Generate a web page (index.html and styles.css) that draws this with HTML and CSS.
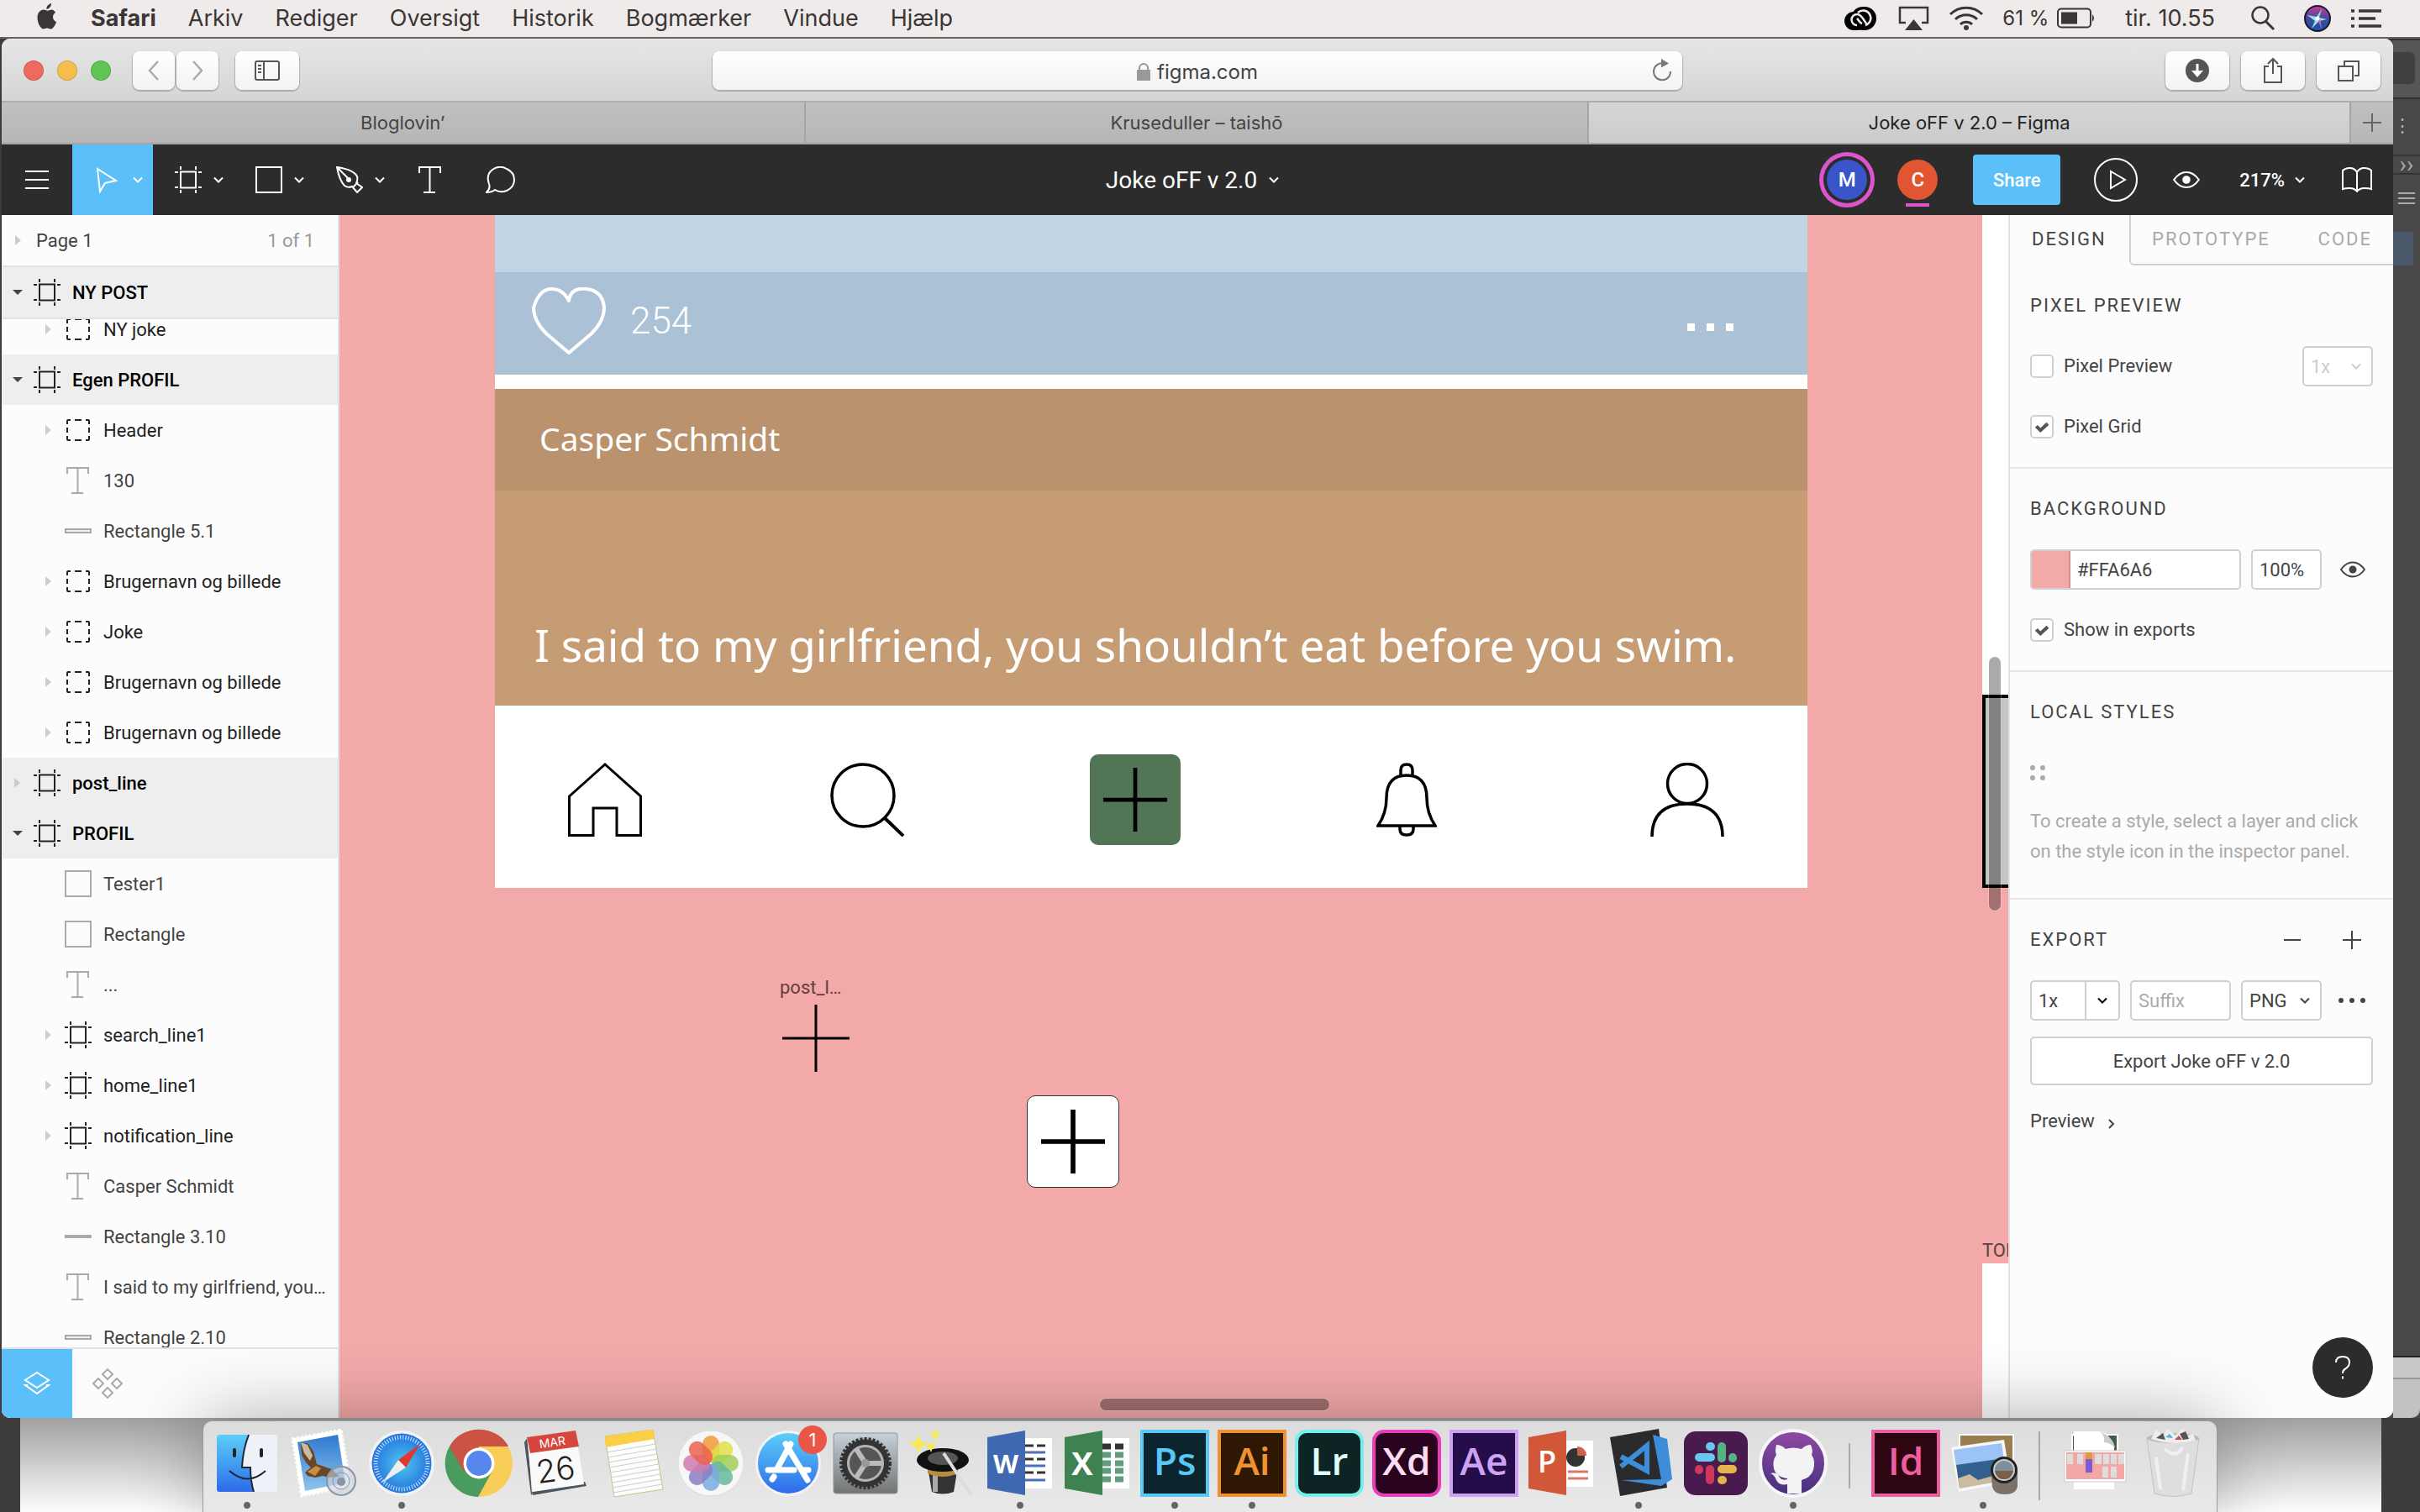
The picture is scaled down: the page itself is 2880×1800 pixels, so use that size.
FILE: index.html
```html
<!DOCTYPE html>
<html lang="da">
<head>
<meta charset="utf-8">
<title>Joke oFF v 2.0 – Figma</title>
<link rel="stylesheet" href="styles.css">
</head>
<body>
<svg class="sprite" aria-hidden="true">
  <symbol id="chev" viewBox="0 0 12 8"><path d="M1 1.500 6 6.500 11 1.500" fill="none" stroke="currentColor" stroke-width="2"/></symbol>
  <symbol id="frame" viewBox="0 0 32 32"><path d="M7 6.500h18v19H7zM7 0v4M25 0v4M7 28v4M25 28v4M0 7h4M28 7h4M0 25h4M28 25h4" fill="none" stroke="currentColor" stroke-width="2"/></symbol>
  <symbol id="group" viewBox="0 0 32 32"><path d="M3 9V5q0-1 1-1h3M3 13v6M3 23v4q0 1 1 1h3M25 4h3q1 0 1 1v4M29 13v6M29 23v4q0 1-1 1h-3M12 4h8M12 28h8" fill="none" stroke="currentColor" stroke-width="2"/></symbol>
  <symbol id="text" viewBox="0 0 32 32"><path d="M3 8V1h25v7M15.500 1v30M8 31h14" fill="none" stroke="currentColor" stroke-width="2"/></symbol>
  <symbol id="rect" viewBox="0 0 32 32"><path d="M1 1h30v30H1z" fill="none" stroke="currentColor" stroke-width="2"/></symbol>
  <symbol id="bar" viewBox="0 0 32 32"><path d="M1 14h30v4H1z" fill="#eee" stroke="currentColor" stroke-width="2"/></symbol>
  <symbol id="bar-thin" viewBox="0 0 32 32"><path d="M0 14h32v4H0z" fill="currentColor"/></symbol>
  <symbol id="closed" viewBox="0 0 12 12"><path d="M2 0 9 6 2 12z" fill="currentColor"/></symbol>
  <symbol id="open" viewBox="0 0 12 12"><path d="M0 3h12L6 9z" fill="currentColor"/></symbol>
  <symbol id="eye" viewBox="0 0 32 24"><path d="M2 12Q8 3.500 16 3.500T30 12Q24 20.500 16 20.500T2 12z" fill="none" stroke="currentColor" stroke-width="2"/><circle cx="16" cy="12" r="4.500" fill="currentColor"/></symbol>
  <symbol id="cross" viewBox="0 0 80 80"><path d="M40 0v80M0 40h80" stroke="currentColor" fill="none"/></symbol>
</svg>

<div class="desktop">
  <div class="app-behind" aria-hidden="true">
    <div class="behind-bar"></div>
    <div class="behind-tabs">⋮</div>
    <div class="behind-chevrons">››</div>
    <div class="behind-panel">
      <svg width="20" height="16" viewBox="0 0 20 16"><path d="M0 2h20M0 8h20M0 14h20" stroke="#aaa" stroke-width="2"/></svg>
      <div class="behind-thumb"></div>
    </div>
    <div class="behind-foot"></div>
  </div>
  <div class="sheet-behind" aria-hidden="true"></div>

  <header class="menubar">
    <nav class="menus" aria-label="Menulinje">
      <svg class="apple" width="28" height="32" viewBox="0 0 28 32"><path d="M19 0c.3 3.200-2.400 6.800-5.600 7C13 4 15.800.600 19 0zM24 11c-2 1.300-3 3-3 5.200 0 2.700 1.600 4.700 4 5.700-1.400 4.400-4.200 8.600-6.800 8.600-1.700 0-2.300-1-4.200-1s-2.700 1-4.200 1C6.600 30.500 2.500 23.500 2.500 17c0-6 3.700-9.400 7.300-9.400 2 0 3.300 1.200 4.800 1.200 1.300 0 2.700-1.300 5-1.300 1.700 0 3.300 1.200 4.400 3.500z" fill="#3b3535"/></svg>
      <a href="#" class="app-name">Safari</a><a href="#">Arkiv</a><a href="#">Rediger</a><a href="#">Oversigt</a><a href="#">Historik</a><a href="#">Bogmærker</a><a href="#">Vindue</a><a href="#">Hjælp</a>
    </nav>
    <div class="status">
      <svg class="st-cc" width="40" height="30" viewBox="0 0 40 30"><rect x="1" y="7" width="26" height="22" rx="11" fill="#000"/><rect x="9" y="1" width="30" height="28" rx="14" fill="#000"/><path d="M16 23a6.500 6.500 0 1 1 0-13c3 0 5 2 7 5l4 6M22 21c-3-1-4-4-6-6M17 8a9 9 0 1 1 9 15" fill="none" stroke="#efebea" stroke-width="2.500"/></svg>
      <svg class="st-air" width="38" height="30" viewBox="0 0 38 30"><path d="M9 20H2V2h33v18h-7" fill="none" stroke="#3b3535" stroke-width="2.500"/><path d="M18.500 16 29 29H8z" fill="#3b3535"/></svg>
      <svg class="st-wifi" width="42" height="30" viewBox="0 0 42 30"><path d="M2 10a27 27 0 0 1 38 0M8 16a19 19 0 0 1 26 0M14 22a10 10 0 0 1 14 0" fill="none" stroke="#3b3535" stroke-width="3"/><circle cx="21" cy="26" r="3" fill="#3b3535"/></svg>
      <span class="battery">61 %</span>
      <svg class="st-bat" width="46" height="26" viewBox="0 0 46 26"><rect x="1" y="1.500" width="39" height="22" rx="4" fill="none" stroke="#3b3535" stroke-width="2"/><path d="M5 5.500h19v14H5z" fill="#3b3535"/><path d="M42 8q4 4.500 0 9z" fill="#3b3535"/></svg>
      <time class="clock">tir. 10.55</time>
      <svg class="st-search" width="30" height="30" viewBox="0 0 30 30"><circle cx="12" cy="11" r="9.500" fill="none" stroke="#3b3535" stroke-width="2.500"/><path d="m18 18 10 10" stroke="#3b3535" stroke-width="3"/></svg>
      <svg class="st-siri" width="32" height="32" viewBox="0 0 32 32"><defs><linearGradient id="siri" x2="0" y2="1"><stop offset="0" stop-color="#c93c96"/><stop offset=".5" stop-color="#454a9c"/><stop offset="1" stop-color="#1a4f9e"/></linearGradient></defs><circle cx="16" cy="16" r="15" fill="url(#siri)" stroke="#181830" stroke-width="2"/><path d="M4 12l11 2 6-9-3 10 9 2-9 2-9 9 4-9z" fill="#8fe6ea"/><path d="m16 16 5 13-2-13z" fill="#d86ad0"/><circle cx="16" cy="16" r="2.500" fill="#fff"/></svg>
      <svg class="st-list" width="38" height="24" viewBox="0 0 38 24"><path d="M9 3h27M9 12h20M9 21h27M0 3h4M0 12h4M0 21h4" stroke="#3b3535" stroke-width="3.500"/></svg>
    </div>
  </header>

  <div class="window">
    <div class="safari-bar">
      <div class="safari-left">
        <span class="light red"></span><span class="light yellow"></span><span class="light green"></span>
        <button class="sbtn nav-back" aria-label="Tilbage"><svg width="16" height="26" viewBox="0 0 16 26"><path d="M13 2 3 13l10 11" fill="none" stroke="#aaa" stroke-width="2.500"/></svg></button>
        <button class="sbtn nav-fwd" aria-label="Frem"><svg width="16" height="26" viewBox="0 0 16 26"><path d="m3 2 10 11L3 24" fill="none" stroke="#aaa" stroke-width="2.500"/></svg></button>
        <button class="sbtn nav-side" aria-label="Indholdsoversigt"><svg width="30" height="24" viewBox="0 0 30 24"><rect x="1" y="1" width="28" height="22" rx="2" fill="none" stroke="#555" stroke-width="2"/><path d="M11 1v22M4 6h4M4 10h4M4 14h4" stroke="#555" stroke-width="2"/></svg></button>
      </div>
      <div class="url">
        <span class="site"><svg width="16" height="21" viewBox="0 0 16 21"><path d="M0 8h16v13H0z" fill="#999"/><path d="M3 9V6a5 5 0 0 1 10 0v3" fill="none" stroke="#999" stroke-width="2"/></svg>figma.com</span>
        <button class="plain reload" aria-label="Genindlæs"><svg width="24" height="28" viewBox="0 0 24 28"><path d="M14 5.500A10 10 0 1 0 22 15" fill="none" stroke="#777" stroke-width="2"/><path d="m11 0 9 5.500-9 5z" fill="#777"/></svg></button>
      </div>
      <div class="safari-right">
        <button class="sbtn" aria-label="Overførsler"><svg width="28" height="28" viewBox="0 0 28 28"><circle cx="14" cy="14" r="14" fill="#555"/><path d="M14 6v10" stroke="#fff" stroke-width="3"/><path d="M7 14h14l-7 8z" fill="#fff"/></svg></button>
        <button class="sbtn" aria-label="Del"><svg width="24" height="32" viewBox="0 0 24 32"><path d="M7 11H2v19h20V11h-5M12 20V3M6 8l6-6 6 6" fill="none" stroke="#555" stroke-width="2"/></svg></button>
        <button class="sbtn" aria-label="Faner"><svg width="26" height="26" viewBox="0 0 26 26"><path d="M1 8h17v17H1zM8 7V2h17v17h-5" fill="none" stroke="#555" stroke-width="2"/></svg></button>
      </div>
    </div>
    <nav class="safari-tabs" aria-label="Faner">
      <a href="#">Bloglovin’</a><a href="#">Kruseduller – taishō</a><a href="#" class="current">Joke oFF v 2.0 – Figma</a><button class="plain" aria-label="Ny fane"><svg width="22" height="22" viewBox="0 0 22 22"><path d="M11 0v22M0 11h22" stroke="#666" stroke-width="2"/></svg></button>
    </nav>

    <div class="toolbar">
      <div class="tools">
        <button class="tool wide" aria-label="Menu"><svg width="30" height="22" viewBox="0 0 30 22"><path d="M1 1h28M1 11h28M1 21h28" stroke="#fff" stroke-width="2"/></svg></button>
        <button class="tool active" aria-label="Flyt"><svg width="32" height="32" viewBox="0 0 32 32"><path d="m4 3 22 14-13 3-6 10z" fill="none" stroke="#fff" stroke-width="2"/></svg><svg class="chev"><use href="#chev"/></svg></button>
        <button class="tool" aria-label="Ramme"><svg width="32" height="32"><use href="#frame"/></svg><svg class="chev"><use href="#chev"/></svg></button>
        <button class="tool" aria-label="Rektangel"><svg width="32" height="32"><use href="#rect"/></svg><svg class="chev"><use href="#chev"/></svg></button>
        <button class="tool" aria-label="Pen"><svg width="32" height="32" viewBox="0 0 32 32"><path d="M1 1q20 3 24 11 1 4-1 8l7 5-6 6-6-7q-5 2-9-1Q4 17 1 1zM1 1l13 13M20 25l6-6" fill="none" stroke="#fff" stroke-width="2"/><circle cx="15" cy="16" r="3" fill="#fff"/></svg><svg class="chev"><use href="#chev"/></svg></button>
        <button class="tool wide" aria-label="Tekst"><svg width="32" height="32"><use href="#text"/></svg></button>
        <button class="tool wide" aria-label="Kommentar"><svg width="36" height="32" viewBox="0 0 36 32"><path d="M1 31q5-5 3-10Q0 10 8 4t17-1q9 4 9 13t-9 13q-8 3-14-1-4 3-10 3z" fill="none" stroke="#fff" stroke-width="2"/></svg></button>
      </div>
      <button class="doc-title">Joke oFF v 2.0<svg class="chev"><use href="#chev"/></svg></button>
      <div class="actions">
        <span class="avatar m">M</span><span class="avatar c">C</span>
        <button class="share">Share</button>
        <button class="plain" aria-label="Præsenter"><svg width="54" height="54" viewBox="0 0 54 54"><circle cx="27" cy="27" r="25" fill="none" stroke="#fff" stroke-width="2"/><path d="m21 17 17 10-17 10z" fill="none" stroke="#fff" stroke-width="2"/></svg></button>
        <button class="plain eye" aria-label="Vis"><svg width="34" height="26"><use href="#eye"/></svg></button>
        <button class="plain zoom">217%<svg class="chev"><use href="#chev"/></svg></button>
        <button class="plain book" aria-label="Bibliotek"><svg width="36" height="30" viewBox="0 0 36 30"><path d="M18 6Q15 1 9.500 1T1 4v22q3-1 8.500-1t8.500 4q3-4 8.500-4t8.500 1V4q-3-3-8.500-3T18 6v22" fill="none" stroke="#fff" stroke-width="2"/></svg></button>
      </div>
    </div>

    <div class="editor">
      <aside class="layers">
        <div class="page-row"><svg class="tri"><use href="#closed"/></svg><span class="page-name">Page 1</span><span class="page-count">1 of 1</span></div>
        <div class="row frame sticky"><svg class="tri down"><use href="#open"/></svg><svg class="ico"><use href="#frame"/></svg><span>NY POST</span></div>
        <div class="list-clip">
          <ul class="list">
            <li class="row child dark"><svg class="tri"><use href="#closed"/></svg><svg class="ico"><use href="#group"/></svg><span>NY joke</span></li>
            <li class="row frame"><svg class="tri down"><use href="#open"/></svg><svg class="ico"><use href="#frame"/></svg><span>Egen PROFIL</span></li>
            <li class="row child dark"><svg class="tri"><use href="#closed"/></svg><svg class="ico"><use href="#group"/></svg><span>Header</span></li>
            <li class="row child"><i class="tri"></i><svg class="ico"><use href="#text"/></svg><span>130</span></li>
            <li class="row child"><i class="tri"></i><svg class="ico"><use href="#bar"/></svg><span>Rectangle 5.1</span></li>
            <li class="row child dark"><svg class="tri"><use href="#closed"/></svg><svg class="ico"><use href="#group"/></svg><span>Brugernavn og billede</span></li>
            <li class="row child dark"><svg class="tri"><use href="#closed"/></svg><svg class="ico"><use href="#group"/></svg><span>Joke</span></li>
            <li class="row child dark"><svg class="tri"><use href="#closed"/></svg><svg class="ico"><use href="#group"/></svg><span>Brugernavn og billede</span></li>
            <li class="row child dark"><svg class="tri"><use href="#closed"/></svg><svg class="ico"><use href="#group"/></svg><span>Brugernavn og billede</span></li>
            <li class="row frame"><svg class="tri"><use href="#closed"/></svg><svg class="ico"><use href="#frame"/></svg><span>post_line</span></li>
            <li class="row frame"><svg class="tri down"><use href="#open"/></svg><svg class="ico"><use href="#frame"/></svg><span>PROFIL</span></li>
            <li class="row child"><i class="tri"></i><svg class="ico"><use href="#rect"/></svg><span>Tester1</span></li>
            <li class="row child"><i class="tri"></i><svg class="ico"><use href="#rect"/></svg><span>Rectangle</span></li>
            <li class="row child"><i class="tri"></i><svg class="ico"><use href="#text"/></svg><span>...</span></li>
            <li class="row child dark"><svg class="tri"><use href="#closed"/></svg><svg class="ico"><use href="#frame"/></svg><span>search_line1</span></li>
            <li class="row child dark"><svg class="tri"><use href="#closed"/></svg><svg class="ico"><use href="#frame"/></svg><span>home_line1</span></li>
            <li class="row child dark"><svg class="tri"><use href="#closed"/></svg><svg class="ico"><use href="#frame"/></svg><span>notification_line</span></li>
            <li class="row child"><i class="tri"></i><svg class="ico"><use href="#text"/></svg><span>Casper Schmidt</span></li>
            <li class="row child"><i class="tri"></i><svg class="ico"><use href="#bar-thin"/></svg><span>Rectangle 3.10</span></li>
            <li class="row child"><i class="tri"></i><svg class="ico"><use href="#text"/></svg><span>I said to my girlfriend, you…</span></li>
            <li class="row child"><i class="tri"></i><svg class="ico"><use href="#bar"/></svg><span>Rectangle 2.10</span></li>
          </ul>
        </div>
        <div class="layer-foot">
          <button class="foot-btn on" aria-label="Lag"><svg width="32" height="30" viewBox="0 0 32 30"><path d="m16 2 14 9-14 9-14-9z" fill="none" stroke="#fff" stroke-width="2"/><path d="M5 17H2l14 10 14-10h-3" fill="none" stroke="#fff" stroke-width="2"/></svg></button>
          <button class="foot-btn" aria-label="Komponenter"><svg width="36" height="36" viewBox="0 0 36 36"><path d="m18 1 6 6-6 6-6-6zM18 23l6 6-6 6-6-6zM7 12l6 6-6 6-6-6zM29 12l6 6-6 6-6-6z" fill="none" stroke="#aaa" stroke-width="2"/></svg></button>
        </div>
      </aside>

      <main class="canvas">
        <section class="phone">
          <div class="post-tail"></div>
          <div class="post-bar">
            <svg width="88" height="80" viewBox="0 0 88 80"><path d="M44 16Q37 2 23 2T2 24q0 16 15 31l27 23 27-23q15-15 15-31Q84 4 65 2T44 16z" fill="none" stroke="#fff" stroke-width="4" stroke-linejoin="round"/></svg>
            <span class="likes">254</span>
            <span class="more"><i></i><i></i><i></i></span>
          </div>
          <div class="post-author">Casper Schmidt</div>
          <div class="post-text">I said to my girlfriend, you shouldn’t eat before you swim.</div>
          <div class="phone-nav">
            <svg width="88" height="88" viewBox="0 0 88 88"><path d="M1.500 40 44 2l42.500 38v46.500H58V54H30v32.500H1.500z" fill="none" stroke="#000" stroke-width="3"/></svg>
            <svg width="88" height="88" viewBox="0 0 88 88"><circle cx="39" cy="39" r="37" fill="none" stroke="#000" stroke-width="3.500"/><path d="m64 65 23 22" stroke="#000" stroke-width="4"/></svg>
            <span class="add"><svg width="76" height="76"><use href="#cross"/></svg></span>
            <svg width="72" height="88" viewBox="0 0 72 88"><path d="M29 16V9q0-7 7-7t7 7v7M2 75Q12 60 12 42q0-27 24-27t24 27q0 18 10 33zM28 76v3q0 7 8 7t8-7v-3" fill="none" stroke="#000" stroke-width="3.500"/></svg>
            <svg width="88" height="88" viewBox="0 0 88 88"><circle cx="44" cy="25" r="23.500" fill="none" stroke="#000" stroke-width="3.500"/><path d="M2 88q0-39 42-39t42 39" fill="none" stroke="#000" stroke-width="3.500"/></svg>
          </div>
        </section>
        <span class="frame-label label-post">post_l…</span>
        <svg class="node-plus" width="80" height="80"><use href="#cross"/></svg>
        <div class="node-add"><svg width="76" height="76"><use href="#cross"/></svg></div>
        <div class="side-frame"></div>
        <div class="side-rect"></div>
        <span class="frame-label label-top">TOPLIST</span>
        <div class="side-frame lower"></div>
        <div class="scroll-v"></div>
        <div class="scroll-h"></div>
      </main>

      <aside class="inspector">
        <div class="insp-tabs"><button class="itab on">DESIGN</button><div class="itab-rest"><button class="itab">PROTOTYPE</button><button class="itab">CODE</button></div></div>
        <section class="sec">
          <h2>PIXEL PREVIEW</h2>
          <div class="line"><label class="check"><input type="checkbox">Pixel Preview</label><span class="pick faded"><select aria-label="Skala" disabled><option>1x</option></select><svg class="chev"><use href="#chev"/></svg></span></div>
          <div class="line last"><label class="check"><input type="checkbox" checked>Pixel Grid</label></div>
        </section>
        <section class="sec">
          <h2>BACKGROUND</h2>
          <div class="line fields"><span class="color"><button class="swatch" aria-label="Farve"></button><input type="text" value="#FFA6A6" aria-label="Farvekode"></span><input class="field pct" type="text" value="100%" aria-label="Opacitet"><button class="plain show" aria-label="Synlig"><svg width="32" height="24"><use href="#eye"/></svg></button></div>
          <div class="line last"><label class="check"><input type="checkbox" checked>Show in exports</label></div>
        </section>
        <section class="sec styles">
          <h2>LOCAL STYLES</h2>
          <svg width="18" height="18" viewBox="0 0 18 18" fill="#aaa"><circle cx="3" cy="3" r="3"/><circle cx="15" cy="3" r="3"/><circle cx="3" cy="15" r="3"/><circle cx="15" cy="15" r="3"/></svg>
          <p>To create a style, select a layer and click on the style icon in the inspector panel.</p>
        </section>
        <section class="sec export">
          <div class="export-head"><h2>EXPORT</h2><button class="plain" aria-label="Fjern"><svg width="22" height="22" viewBox="0 0 22 22"><path d="M1 11h20" stroke="#444" stroke-width="2"/></svg></button><button class="plain" aria-label="Tilføj"><svg width="22" height="22" viewBox="0 0 22 22"><path d="M0 11h22M11 0v22" stroke="#444" stroke-width="2"/></svg></button></div>
          <div class="export-row"><span class="combo"><input type="text" value="1x" aria-label="Skala"><button aria-label="Vælg skala"><svg class="chev"><use href="#chev"/></svg></button></span><input class="field suffix" type="text" placeholder="Suffix" aria-label="Suffix"><span class="pick png"><select aria-label="Format"><option>PNG</option></select><svg class="chev"><use href="#chev"/></svg></span><button class="plain dots" aria-label="Mere"><svg width="32" height="6" viewBox="0 0 32 6" fill="#444"><circle cx="3" cy="3" r="3"/><circle cx="16" cy="3" r="3"/><circle cx="29" cy="3" r="3"/></svg></button></div>
          <button class="export-btn">Export Joke oFF v 2.0</button>
          <button class="plain preview">Preview<svg width="8" height="12" viewBox="0 0 8 12"><path d="m1 1 5 5-5 5" fill="none" stroke="#444" stroke-width="2"/></svg></button>
        </section>
        <button class="help" aria-label="Hjælp"><svg width="20" height="28" viewBox="0 0 20 28"><path d="M2 8q0-7 8-7t8 7q0 4-4 7-4 2-4 6M10 24.500v3" fill="none" stroke="#fff" stroke-width="2"/></svg></button>
      </aside>
    </div>
  </div>

  <nav class="dock" aria-label="Dock">
    <a href="#" class="app run" aria-label="Finder"><svg viewBox="0 0 84 84"><defs><linearGradient id="fb" x2="0" y2="1"><stop offset="0" stop-color="#5bcff8"/><stop offset="1" stop-color="#2e6bea"/></linearGradient></defs><rect x="6" y="8" width="72" height="68" rx="3" fill="#eef2f8"/><path d="M9 8h35q-7 18-8 39h10q0 16 4 29H9q-3 0-3-3V11q0-3 3-3z" fill="url(#fb)"/><path d="M27 26v7M59 26v7" stroke="#222" stroke-width="4" stroke-linecap="round"/><path d="M21 51q22 19 43 0M44 8q-7 18-8 39h10q0 16 4 29" fill="none" stroke="#1d2733" stroke-width="2"/></svg></a>
    <a href="#" class="app" aria-label="Mail"><svg viewBox="0 0 84 84"><defs><linearGradient id="ml" x2="0" y2="1"><stop offset="0" stop-color="#2f79cf"/><stop offset="1" stop-color="#8ec4ee"/></linearGradient></defs><path d="m4 13 58-11 11 67-58 12z" fill="#fff" stroke="#fff" stroke-width="3" stroke-dasharray="3 2"/><path d="m10 17 48-9 9 57-48 10z" fill="url(#ml)"/><path d="m14 17 9 2 6 9 4 15 6 2 12 4 9 9-12 1-8-2-9 2-9-2-3-4 7-6-6-6-5-9z" fill="#6a4526"/><path d="m14 17 8 3 6 13-3 6-7-9z" fill="#cdb99e"/><path d="m22 52 10-7 6 3-7 9z" fill="#c78d42"/><circle cx="62" cy="63" r="17" fill="#cbd4dd" fill-opacity=".6" stroke="#8894a2" stroke-width="2"/><circle cx="62" cy="63" r="10" fill="none" stroke="#8894a2"/><circle cx="62" cy="64" r="5" fill="#8894a2"/></svg></a>
    <a href="#" class="app run" aria-label="Safari"><svg viewBox="0 0 84 84"><defs><radialGradient id="sf"><stop offset="0" stop-color="#52c5ee"/><stop offset="1" stop-color="#2374df"/></radialGradient></defs><circle cx="42" cy="42" r="39" fill="#f3f3f3"/><circle cx="42" cy="42" r="35.500" fill="url(#sf)"/><circle cx="42" cy="42" r="31" fill="none" stroke="#d8eefb" stroke-width="5" stroke-dasharray="1 2.200"/><path d="M64 19 47 47l-9-9z" fill="#e3372f"/><path d="m19 65 19-27 9 9z" fill="#eee"/></svg></a>
    <a href="#" class="app" aria-label="Chrome"><svg viewBox="0 0 84 84"><circle cx="42" cy="42" r="40" fill="#f8cd58"/><path d="M42 42 8 21a40 40 0 0 1 69 1H42z" fill="#cb5344"/><path d="M7 22a40 40 0 0 0 34 60l17-31-16-9z" fill="#4a9b5f"/><path d="M24 52 7 22Q17 3 42 2q26 2 35 20H42z" fill="#cb5344"/><circle cx="42" cy="42" r="18.500" fill="#fff"/><circle cx="42" cy="42" r="15" fill="#5687ec"/></svg></a>
    <a href="#" class="app" aria-label="Kalender"><svg viewBox="0 0 84 84"><path d="m4 17 4-6 5 68-1 1zM13 76l63-12 2 5-64 11z" fill="#4a555e"/><path d="m7 11 58-8 10 64-61 9z" fill="#fafafa"/><path d="m7 11 58-8 4 19-58 8z" fill="#d6463e"/><g font-family="Inter, sans-serif" text-anchor="middle"><text x="38" y="22" font-size="14" fill="#fff" transform="rotate(-8 38 22)">MAR</text><text x="43" y="63" font-size="38" font-weight="300" fill="#222" transform="rotate(-8 43 63)">26</text></g></svg></a>
    <a href="#" class="app" aria-label="Noter"><svg viewBox="0 0 84 84"><path d="m8 10 57-8 12 71-58 9z" fill="#fdfdfb" stroke="#c9bd8f"/><path d="m8 10 57-8 2 11-58 10z" fill="#fbcf45"/><path d="m10 29 58-10M11 35l58-10M12 41l58-10M13 47l58-10M14 53l58-10M15 59l58-10M16 65l58-10M17 71l58-10M18 77l58-10" stroke="#ccc" stroke-width="1"/></svg></a>
    <a href="#" class="app" aria-label="Fotos"><svg viewBox="0 0 84 84"><circle cx="42" cy="42" r="39" fill="#f7f7f7" stroke="#ddd"/><g fill-opacity=".85"><rect x="32" y="9" width="20" height="32" rx="10" fill="#f29a38"/><rect x="32" y="9" width="20" height="32" rx="10" fill="#dfe048" transform="rotate(45 42 42)"/><rect x="32" y="9" width="20" height="32" rx="10" fill="#a2cf59" transform="rotate(90 42 42)"/><rect x="32" y="9" width="20" height="32" rx="10" fill="#68b99c" transform="rotate(135 42 42)"/><rect x="32" y="9" width="20" height="32" rx="10" fill="#7bacdf" transform="rotate(180 42 42)"/><rect x="32" y="9" width="20" height="32" rx="10" fill="#8e7cc3" transform="rotate(225 42 42)"/><rect x="32" y="9" width="20" height="32" rx="10" fill="#d07bb0" transform="rotate(270 42 42)"/><rect x="32" y="9" width="20" height="32" rx="10" fill="#ea6450" transform="rotate(315 42 42)"/></g></svg></a>
    <a href="#" class="app" aria-label="App Store"><svg viewBox="0 0 84 84"><circle cx="42" cy="42" r="39" fill="#f3f3f3"/><circle cx="42" cy="42" r="36" fill="url(#fb)"/><path d="M45 19 28 50M39 19l26 43M18 50h31M60 50h6M25 58l-2 3" stroke="#fff" stroke-width="7" stroke-linecap="round"/></svg><span class="badge">1</span></a>
    <a href="#" class="app" aria-label="Systemindstillinger"><svg viewBox="0 0 84 84"><defs><linearGradient id="sy" x2="0" y2="1"><stop offset="0" stop-color="#c6d2da"/><stop offset="1" stop-color="#737373"/></linearGradient></defs><rect x="4" y="6" width="76" height="72" rx="3" fill="url(#sy)" stroke="#8c98a0"/><circle cx="42" cy="42" r="29" fill="#777" stroke="#333" stroke-width="4" stroke-dasharray="3 2"/><circle cx="42" cy="42" r="25" fill="#b2b5b7" stroke="#333" stroke-width="6"/><circle cx="42" cy="42" r="19" fill="#555"/><path d="M42 42h19M42 42l-11-17M42 42 31 59" stroke="#bbb" stroke-width="6"/><circle cx="42" cy="42" r="5" fill="#999"/></svg></a>
    <a href="#" class="app" aria-label="Tryllehat"><svg viewBox="0 0 84 84"><path d="M24 46h36l-5 30q-13 5-26 0z" fill="#333"/><path d="M30 50h6v26h-6z" fill="#aaa"/><path d="M24 46q18 9 36 0v8q-18 8-36 0z" fill="#b98b3c"/><ellipse cx="42" cy="38" rx="31" ry="14" fill="#111"/><ellipse cx="42" cy="36" rx="18" ry="8" fill="#555"/><path d="m43 30 33 50" stroke="#ddd" stroke-width="4"/><path d="m13 7 3 9 9 3-9 3-3 9-3-9-9-3 9-3zM33 0l2 6 5 2-5 2-2 6-2-6-5-2 5-2zM28 15l2 5 5 2-5 2-2 5-2-5-5-2 5-2z" fill="#f7ea4a"/></svg></a>
    <a href="#" class="app run" aria-label="Word"><svg viewBox="0 0 84 84"><path d="M44 12h36v60H44z" fill="#fff"/><path d="M46 21h26M46 37h26M46 53h26" stroke="#333" stroke-width="3" stroke-dasharray="12 4"/><path d="M46 29h26M46 45h26M46 62h26" stroke="#4b70b4" stroke-width="3"/><path d="m3 11 45-8v77L3 72z" fill="#3f68b0"/><text x="25" y="54" font-family="Open Sans, sans-serif" font-weight="700" font-size="31" fill="#fff" text-anchor="middle">W</text></svg></a>
    <a href="#" class="app" aria-label="Excel"><svg viewBox="0 0 84 84"><path d="M44 12h36v60H44z" fill="#fff"/><path d="M48 22h25" stroke="#333" stroke-width="7" stroke-dasharray="10 5"/><path d="M48 32h25M48 42h25M48 51h25M48 61h25" stroke="#5f9c7c" stroke-width="7" stroke-dasharray="10 5"/><path d="m3 11 45-8v77L3 72z" fill="#3f8251"/><text x="24" y="56" font-family="Open Sans, sans-serif" font-weight="700" font-size="38" fill="#fff" text-anchor="middle">X</text></svg></a>
    <a href="#" class="app run" aria-label="Photoshop"><span class="adobe ps">Ps</span></a>
    <a href="#" class="app run" aria-label="Illustrator"><span class="adobe ai">Ai</span></a>
    <a href="#" class="app" aria-label="Lightroom"><span class="adobe lr">Lr</span></a>
    <a href="#" class="app" aria-label="Adobe XD"><span class="adobe xd">Xd</span></a>
    <a href="#" class="app" aria-label="After Effects"><span class="adobe ae">Ae</span></a>
    <a href="#" class="app" aria-label="PowerPoint"><svg viewBox="0 0 84 84"><path d="M44 15h36v55H44z" fill="#fff"/><circle cx="59" cy="35" r="11" fill="#333"/><path d="M61 33V22q11 1 11 11z" fill="#d1604a"/><path d="M50 52h24M50 60h24" stroke="#d87a66" stroke-width="3"/><path d="m3 11 45-8v77L3 72z" fill="#d25638"/><text x="25" y="53" font-family="Open Sans, sans-serif" font-weight="600" font-size="36" fill="#fff" text-anchor="middle">P</text></svg></a>
    <a href="#" class="app run" aria-label="VS Code"><svg viewBox="0 0 84 84"><path d="m8 11 58-10 10 70-56 10z" fill="#2b2b2d"/><path d="m59 8 17 5 6 48-13 8-47-7 47-1z" fill="#3d8dd8"/><path d="m21 46 31-25v30L21 34" fill="none" stroke="#3d8dd8" stroke-width="6"/></svg></a>
    <a href="#" class="app" aria-label="Slack"><svg viewBox="0 0 84 84"><rect x="4" y="4" width="76" height="76" rx="14" fill="#481a4d"/><g stroke-width="10" stroke-linecap="round"><path d="M35 22h1M22 35h14" stroke="#6bc5ec"/><path d="M49 22v14M62 35v1" stroke="#56b183"/><path d="M62 49H49M49 62h1" stroke="#e5b44b"/><path d="M35 62V49M22 49v1" stroke="#cf365c"/></g></svg></a>
    <a href="#" class="app run" aria-label="GitHub"><svg viewBox="0 0 84 84"><defs><linearGradient id="gh" x2="0" y2="1"><stop offset="0" stop-color="#8f4aa5"/><stop offset="1" stop-color="#46307d"/></linearGradient></defs><circle cx="42" cy="42" r="39" fill="url(#gh)" stroke="#f6f6f6" stroke-width="4"/><path d="M22 20q6 0 11 5 9-3 19 0 5-5 11-5 3 7 1 12 5 7 2 18-3 9-14 12v16H35V67q-10 2-13-5-2-6-7-8 7-2 11 5 3 4 9 2v-1q-14-2-16-12-2-9 3-16-2-5 0-12z" fill="#f3f3f5"/></svg></a>
    <span class="sep short"></span>
    <a href="#" class="app" aria-label="InDesign"><span class="adobe id">Id</span></a>
    <a href="#" class="app run" aria-label="Billedfremviser"><svg viewBox="0 0 84 84"><path d="M14 8h64v50H14z" fill="#9a7d4e" stroke="#fff" stroke-width="2"/><path d="m4 23 63-9 8 50-62 12z" fill="#f7f7f7"/><path d="m7 26 57-8 3 20-57 8z" fill="#9cc3f5"/><path d="m10 44 57-8 4 24-57 11z" fill="#34608f"/><path d="m12 60 14-5 10 7 14-4 20-2 1 6-57 10z" fill="#cbbba0"/><path d="M51 50h32v20q-2 9-15 9t-15-9z" fill="#7a7266"/><circle cx="67" cy="50" r="16" fill="#222"/><circle cx="67" cy="50" r="13" fill="#c5ccd0"/><circle cx="67" cy="50" r="11" fill="#7e8f9e"/><path d="M56 51h22q-2 10-11 10t-11-10z" fill="#7a5f46"/></svg></a>
    <span class="sep"></span>
    <a href="#" class="app" aria-label="Dokumenter"><svg viewBox="0 0 84 84"><path d="M14 8h54v24H14z" fill="#405d48" stroke="#fff" stroke-width="2"/><path d="M16 4h30q7 0 12 7l6 12v50H16z" fill="#fff"/><path d="M46 4q7 3 6 13 7 0 13 7-2-14-19-20z" fill="#ccc"/><path d="M5 27h73v37H5z" fill="#fff" stroke="#ccc"/><path d="M7 29h69v32H7z" fill="#f4a6a6"/><path d="M8 31h7v12H8zM20 31h7v12h-7zM41 31h8v12h-8zM51 31h7v12h-7zM60 31h7v12h-7zM69 31h7v12h-7zM50 46h7v13h-7zM60 46h7v13h-7z" fill="#ddd"/><path d="M30 29h8v8h-8z" fill="#e0983f"/><path d="M30 37h8v16h-8z" fill="#7f5bd0"/></svg></a>
    <a href="#" class="app" aria-label="Papirkurv"><svg viewBox="0 0 84 84"><path d="M11 12q31 9 62 0l-9 66q-22 7-44 0z" fill="#dededf" stroke="#c2c2c4"/><ellipse cx="42" cy="12" rx="31" ry="6" fill="#bbb"/><path d="m16 13 6-11 8 7 6-8 9 8 8-8 7 8 6-2 3 8q-26 7-53-2z" fill="#eee"/><path d="m22 12 8-6 3 8zM50 7l7-3 4 9-7 1z" fill="#555"/><path d="m33 11 5-4 4 5z" fill="#4bb9ce"/><path d="m44 14 5-5 4 5z" fill="#b5553d"/><path d="M32 25q14 12 21-2M22 35l5 38M60 30l-6 44" stroke="#f0f0f1" stroke-width="4" fill="none"/></svg></a>
  </nav>
</div>
</body>
</html>
```
FILE: styles.css
```css
* { box-sizing: border-box; }
body { margin: 0; font-family: Roboto, sans-serif; font-size: 22px; color: #444; }
button, input, select { font: inherit; color: inherit; margin: 0; }
button { border: 0; padding: 0; background: none; }
a { color: inherit; text-decoration: none; }
svg { display: block; flex: none; }
.sprite { position: absolute; width: 0; height: 0; }
.plain { display: flex; align-items: center; }
.chev { width: 12px; height: 8px; }

.desktop { position: relative; height: 100vh; overflow: hidden; background: #3c3c3c; }

/* Windows that show behind the browser */
.app-behind { position: absolute; top: 46px; right: 0; bottom: 112px; width: 60px; background: #484848; display: flex; flex-direction: column; padding-left: 28px; border-top: 2px solid #333; color: #aaa; }
.behind-bar { height: 70px; padding-top: 14px; background: #565656; border-bottom: 2px solid #333; }
.behind-bar::before { content: ""; display: block; height: 38px; margin-right: 6px; background: #404040; border-radius: 0 6px 6px 0; }
.behind-tabs { height: 66px; padding: 20px 0 0; line-height: 24px; }
.behind-chevrons { height: 24px; line-height: 20px; border: solid #363636; border-width: 2px 0; text-align: center; font-size: 28px; }
.behind-panel { flex: 1; padding: 20px 0 0 6px; }
.behind-thumb { height: 40px; margin: 32px 8px 0 -6px; background: #4a586a; }
.behind-foot { height: 74px; border-top: 2px solid #222; border-bottom-right-radius: 10px; background: linear-gradient(#c9c9c9 24px, #999 24px, #999 26px, #c2c2c2 26px); }
.sheet-behind { position: absolute; left: 24px; right: 46px; bottom: 0; height: 112px; background: linear-gradient(#a0a0a0, #fdfdfd); }

/* Menu bar */
.menubar { height: 46px; display: flex; justify-content: space-between; background: #efebea; border-bottom: 2px solid #6a6060; font: 27px/44px Inter, sans-serif; color: #3b3535; }
.menus { display: flex; gap: 38px; padding-left: 42px; }
.menus .apple { margin-top: 4px; }
.app-name { font-weight: 700; }
.status { display: flex; align-items: center; padding-right: 44px; }
.battery { font-size: 24px; margin-left: 22px; }
.st-air { margin-left: 25px; }
.st-wifi { margin-left: 22px; }
.st-bat { margin-left: 10px; }
.clock { margin-left: 35px; }
.st-search { margin-left: 42px; }
.st-siri { margin-left: 34px; }
.st-list { margin-left: 24px; }

/* Browser window */
.window { position: absolute; inset: 46px 32px 112px 2px; display: flex; flex-direction: column; border-radius: 10px; overflow: hidden; background: #fcfcfc; }
.safari-bar { height: 76px; padding-top: 2px; display: grid; grid-template-columns: 1fr minmax(0, 1154px) 1fr; align-items: center; background: linear-gradient(#e6e6e6, #d5d5d5); border-bottom: 2px solid #adadad; font-family: Inter, sans-serif; }
.safari-left { display: flex; align-items: center; padding-left: 26px; }
.light { width: 24px; height: 24px; border-radius: 50%; margin-right: 16px; border: 1px solid #0002; }
.red { background: #ee6a5f; }
.yellow { background: #f5bd4f; }
.green { background: #61c454; }
.sbtn { width: 76px; height: 46px; display: flex; align-items: center; justify-content: center; background: linear-gradient(#fff, #f2f2f2); border-radius: 8px; box-shadow: 0 1px 1px 1px #0003; }
.nav-back { width: 50px; margin-left: 10px; }
.nav-fwd { width: 50px; margin-left: 2px; }
.nav-side { margin-left: 20px; }
.url { height: 46px; display: flex; align-items: center; background: linear-gradient(#fff, #f2f2f2); border-radius: 8px; box-shadow: 0 1px 1px 1px #0003; padding-right: 12px; }
.site { flex: 1; display: flex; justify-content: center; align-items: center; gap: 8px; padding: 2px 0 0 36px; font-size: 24px; }
.safari-right { display: flex; justify-content: flex-end; gap: 14px; padding-right: 15px; }
.safari-tabs { height: 50px; display: grid; grid-template-columns: 957fr 933fr 907fr 50px; background: linear-gradient(#c0c0c0, #b6b6b6); border-bottom: 2px solid #a6a6a6; font: 22px/48px Inter, sans-serif; }
.safari-tabs a { text-align: center; border-right: 2px solid #a6a6a6; }
.safari-tabs .current { background: linear-gradient(#d6d6d6, #cbcbcb); color: #222; }
.safari-tabs button { justify-content: center; }

/* Editor toolbar */
.toolbar { height: 84px; display: grid; grid-template-columns: 1fr auto 1fr; background: #2c2c2c; color: #fff; }
.tools { display: flex; }
.tool { width: 96px; display: flex; align-items: center; gap: 14px; padding-left: 26px; color: #fff; }
.tool.wide { width: 84px; padding: 0; justify-content: center; }
.tool.active { background: #5bc0fa; }
.doc-title { display: flex; align-items: center; gap: 14px; font-size: 28px; margin-right: 12px; }
.actions { display: flex; align-items: center; justify-content: flex-end; padding-right: 25px; }
.avatar { width: 48px; height: 48px; border-radius: 50%; text-align: center; font-weight: 500; font-size: 24px; line-height: 48px; }
.avatar.m { background: #3a55c9; box-shadow: 0 0 0 4px #2c2c2c, 0 0 0 9px #dc55cc; }
.avatar.c { position: relative; background: #e15533; margin-left: 36px; }
.avatar.c::after { content: ""; position: absolute; left: 10px; right: 10px; bottom: -8px; height: 4px; background: #dc55cc; }
.share { width: 104px; height: 60px; margin: 0 39px 0 42px; border-radius: 4px; background: #5bc0fa; font-weight: 500; }
.eye { margin-left: 40px; }
.zoom { margin-left: 46px; gap: 12px; font-weight: 500; }
.book { margin-left: 44px; }

.editor { flex: 1; min-height: 0; display: flex; }

/* Layers */
.layers { width: 402px; flex: none; display: flex; flex-direction: column; border-right: 2px solid #e2e2e2; background: #fcfcfc; }
.page-row { height: 60px; display: flex; align-items: center; padding: 0 28px 0 14px; }
.page-name { margin-left: 15px; }
.page-count { margin-left: auto; color: #999; }
.row { height: 60px; display: flex; align-items: center; padding-left: 13px; white-space: nowrap; }
.row.child { padding-left: 50px; }
.row.frame { background: #eee; color: #000; font-weight: 500; }
.row.dark { color: #222; }
.sticky { height: 64px; border: solid #e2e2e2; border-width: 2px 0; }
.tri { width: 12px; height: 12px; color: #ccc; flex: none; }
.tri.down { color: #444; }
.ico { width: 32px; height: 32px; margin: 0 14px 0 13px; color: #aaa; }
.dark .ico, .frame .ico { color: #222; }
.list-clip { flex: 1; min-height: 0; overflow: hidden; display: flex; flex-direction: column; }
.list { list-style: none; margin: -18px 0 0; padding: 0; }
.layer-foot { height: 84px; flex: none; display: flex; border-top: 2px solid #e2e2e2; }
.foot-btn { width: 84px; display: flex; align-items: center; justify-content: center; }
.foot-btn.on { background: #5bc0fa; }

/* Canvas: objects sit at free positions */
.canvas { flex: 1; position: relative; overflow: hidden; background: #f4a9a9; font-family: "Noto Sans", sans-serif; }
.phone { position: absolute; left: 185px; top: 0; width: 1562px; background: #fff; color: #fff; }
.post-tail { height: 68px; background: #c1d4e3; }
.post-bar { height: 122px; display: flex; align-items: center; padding: 0 88px 6px 44px; background: #abc1d6; margin-bottom: 17px; }
.likes { margin-left: 29px; font: 300 44px/60px Roboto, sans-serif; }
.more { margin-left: auto; display: flex; gap: 14px; padding-top: 14px; }
.more i { width: 9px; height: 9px; background: #fff; }
.post-author { height: 121px; padding-left: 53px; font-size: 39px; line-height: 118px; background: #ba926d; }
.post-text { height: 256px; padding: 144px 0 0 47px; font-size: 53px; line-height: 80px; white-space: nowrap; background: #c69c74; }
.phone-nav { height: 217px; display: grid; grid-template-columns: 312px 309px 341px 326px auto; align-items: center; padding: 6px 0 0 87px; }
.add, .node-add { width: 108px; height: 108px; display: flex; align-items: center; justify-content: center; border-radius: 10px; color: #000; stroke-width: 5px; }
.add { background: #527555; }
.node-add { position: absolute; left: 818px; top: 1048px; width: 110px; height: 110px; background: #fff; border: 1px solid #333; stroke-width: 6px; }
.node-plus { position: absolute; left: 527px; top: 940px; color: #000; stroke-width: 3px; }
.frame-label { position: absolute; font: 22px/28px Roboto, sans-serif; color: #5f4042; }
.label-post { left: 524px; top: 906px; }
.label-top { left: 1955px; top: 1219px; }
.side-frame { position: absolute; left: 1955px; right: 0; top: 0; height: 572px; background: #fff; }
.side-frame.lower { top: 1248px; height: auto; bottom: 0; }
.side-rect { position: absolute; left: 1955px; right: -9px; top: 571px; height: 230px; border: 4px solid #000; background: #c4c4c4; }
.scroll-v { position: absolute; right: 9px; top: 526px; width: 14px; height: 302px; border-radius: 7px; background: #0005; box-shadow: 0 0 0 1px #fff4; }
.scroll-h { position: absolute; left: 905px; bottom: 9px; width: 273px; height: 14px; border-radius: 7px; background: #0005; box-shadow: 0 0 0 1px #fff4; }

/* Inspector */
.inspector { position: relative; width: 458px; flex: none; border-left: 2px solid #e2e2e2; background: #fcfcfc; }
.insp-tabs { height: 60px; display: flex; }
.itab { height: 56px; text-align: left; letter-spacing: 2px; }
.itab.on { width: 142px; padding-left: 26px; }
.itab-rest { flex: 1; display: flex; justify-content: space-between; padding: 0 25px; border: solid #d0d0d0; border-width: 0 0 2px 2px; border-bottom-left-radius: 6px; color: #aaa; }
.sec { padding: 34px 24px 0; border-bottom: 2px solid #e5e5e5; }
h2 { margin: 0; font-size: 22px; line-height: 28px; font-weight: 400; letter-spacing: 2px; }
.line { height: 48px; margin-top: 34px; display: flex; align-items: center; justify-content: space-between; }
.line.last { height: 28px; margin: 34px 0 34px; }
.check { display: flex; align-items: center; gap: 12px; line-height: 26px; }
.check input { appearance: none; width: 28px; height: 28px; border: 2px solid #d0d0d0; border-radius: 5px; background: #fff; }
.check input:checked::before { content: ""; display: block; height: 24px; background: #555; clip-path: polygon(16% 53%, 29% 42%, 43% 56%, 73% 28%, 85% 41%, 43% 79%); }
.pick { position: relative; display: block; width: 84px; height: 48px; }
.pick select { appearance: none; width: 100%; height: 48px; padding: 0 8px; border: 2px solid #d0d0d0; border-radius: 5px; background: #fff; opacity: 1; }
.pick .chev { position: absolute; right: 14px; top: 20px; pointer-events: none; }
.pick.faded { color: #ccc; }
.fields { justify-content: flex-start; gap: 12px; }
.color { width: 251px; height: 48px; display: flex; border: 2px solid #d0d0d0; border-radius: 5px; overflow: hidden; background: #fff; }
.color input { width: 190px; border: 0; padding: 0 0 0 8px; background: none; }
.swatch { width: 48px; flex: none; margin: -2px 0 -2px -2px; border: 2px solid #cf8f8f; border-radius: 5px 0 0 5px; background: #f4a9a9; }
.field { height: 48px; padding: 0 8px; border: 2px solid #d0d0d0; border-radius: 5px; background: #fff; }
.pct { width: 84px; }
.show { margin-left: 9px; }
.styles svg { margin: 49px 0 0; }
.styles p { margin: 31px 0 37px; line-height: 36px; color: #aaa; }
.export { border: 0; }
.export-head { display: flex; align-items: center; padding-right: 14px; }
.export-head h2 { flex: 1; }
.export-head button + button { margin-left: 49px; }
.export-row { display: flex; align-items: center; gap: 12px; margin-top: 34px; }
.combo { width: 107px; height: 48px; display: flex; border: 2px solid #d0d0d0; border-radius: 5px; background: #fff; }
.combo input { width: 63px; border: 0; padding: 0 8px; background: none; }
.combo button { flex: 1; display: flex; align-items: center; justify-content: center; border-left: 2px solid #d0d0d0; color: #000; }
.suffix { width: 120px; }
.suffix::placeholder { color: #aaa; }
.pick.png { width: 96px; }
.dots { margin-left: 8px; }
.export-btn { width: 100%; height: 58px; margin-top: 19px; border: 2px solid #d0d0d0; border-radius: 5px; background: #fff; }
.preview { margin-top: 30px; gap: 16px; }
.preview svg { margin-top: 6px; }
.help { position: absolute; right: 24px; bottom: 24px; width: 72px; height: 72px; display: flex; align-items: center; justify-content: center; border-radius: 50%; background: #2c2c2c; }

/* Dock */
.dock { position: absolute; left: 50%; bottom: 0; transform: translateX(-50%); height: 108px; display: flex; padding: 0 6px; border-radius: 10px 10px 0 0; background: linear-gradient(#dcdcdc, #e9e9e9); box-shadow: 0 0 0 1px #999, 0 0 90px #0005; }
.app { position: relative; width: 92px; padding: 8px 4px 0; }
.app > svg { width: 84px; height: 84px; }
.app.run::after { content: ""; position: absolute; left: 42px; bottom: 4px; width: 8px; height: 8px; border-radius: 50%; background: #666; }
.badge { position: absolute; right: 0; top: 5px; width: 34px; height: 34px; border-radius: 50%; background: #ea5646; color: #fff; font: 22px/34px Inter, sans-serif; text-align: center; }
.adobe { display: block; width: 82px; height: 80px; margin: 2px auto 0; border: 4px solid; text-align: center; font: 600 46px/64px "Open Sans", sans-serif; }
.ps { color: #58c8f5; background: #0b242e; }
.ai { color: #ed9131; background: #2e1803; }
.lr { color: #dffbfa; background: #0c2424; border-color: #76eeec; border-radius: 14px; }
.xd { color: #fbdcf3; background: #2a041e; border-color: #e83fb8; border-radius: 14px; }
.ae { color: #cda2f4; background: #240d48; }
.id { color: #ea609e; background: #2d0611; }
.sep { width: 2px; height: 82px; margin: 12px 20px 0; background: #aaa; }
.sep.short { height: 54px; margin-top: 26px; }
```
